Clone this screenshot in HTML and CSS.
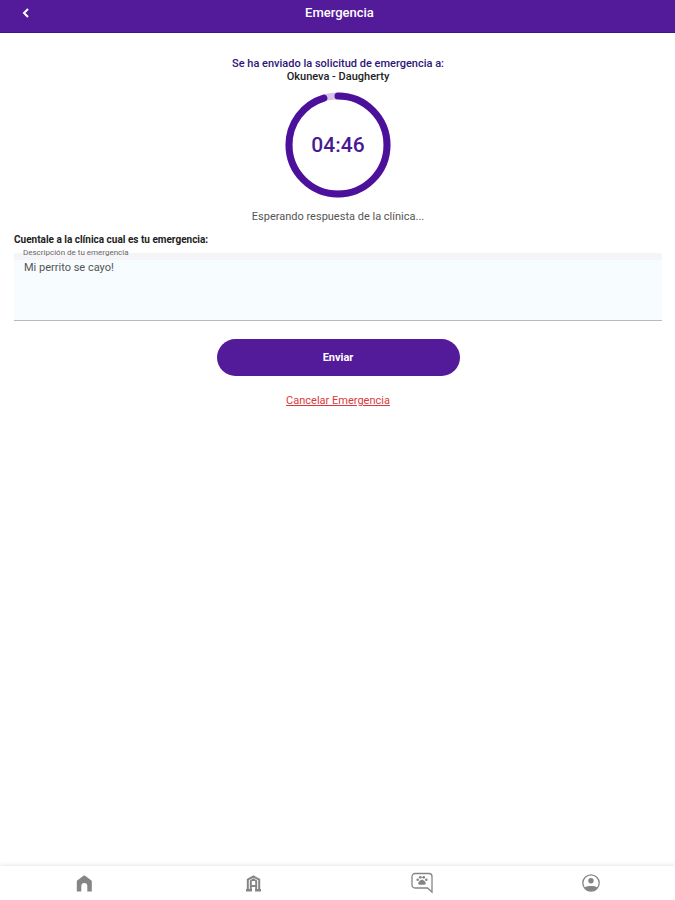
FILE: index.html
```html
<!DOCTYPE html>
<html lang="es">
<head>
  <meta charset="UTF-8">
  <meta name="viewport" content="width=device-width, initial-scale=1.0">
  <title>Emergencia</title>
  <link rel="stylesheet" href="styles.css">
</head>
<body>

  <header class="top-bar">
    <button class="back-btn" type="button" aria-label="Volver">
      <svg width="8" height="12" viewBox="0 0 8 12"><path d="M6 2 2 6l4 4"/></svg>
    </button>
    <h1>Emergencia</h1>
  </header>

  <main class="content">
    <p class="sent-to">Se ha enviado la solicitud de emergencia a:</p>
    <p class="clinic">Okuneva - Daugherty</p>

    <div class="timer">
      <svg width="106" height="106" viewBox="0 0 106 106">
        <circle class="track" cx="53" cy="53" r="49"/>
        <circle class="progress" cx="53" cy="53" r="49" pathLength="300" stroke-dasharray="286 300" transform="rotate(-90 53 53)"/>
      </svg>
      <span class="time">04:46</span>
    </div>

    <p class="waiting">Esperando respuesta de la clínica...</p>

    <form class="emergency-form">
      <p class="question">Cuentale a la clínica cual es tu emergencia:</p>
      <div class="field">
        <label for="description">Descripción de tu emergencia</label>
        <textarea id="description">Mi perrito se cayo!</textarea>
      </div>
      <button class="send-btn" type="button">Enviar</button>
      <a class="cancel" href="#">Cancelar Emergencia</a>
    </form>
  </main>

  <nav class="tab-bar">
    <a href="#" aria-label="Inicio">
      <svg width="20" height="20" viewBox="0 0 20 20">
        <path class="fill" d="M9.500 2.800 3.500 7.200Q2.800 7.700 2.800 8.500V18.500h4.500V13a3 3 0 0 1 6 0v5.500h4.500V8.500q0-.8-.7-1.300L11.100 2.800q-.8-.6-1.600 0z"/>
      </svg>
    </a>
    <a href="#" aria-label="Clínicas">
      <svg width="20" height="20" viewBox="0 0 20 20">
        <path class="house" d="M4.800 17V6.500L10.500 3.500l5.700 3V17M7.800 17V8L10.500 6.500 13.200 8V17M7.800 13h5.400"/>
        <path class="fill" d="M3 16h6v2.500H3zM12 16h6v2.500h-6z"/>
      </svg>
    </a>
    <a href="#" aria-label="Mensajes">
      <svg width="24" height="24" viewBox="0 0 24 24">
        <path class="line" d="M5 2.500h14a3 3 0 0 1 3 3V21l-4.500-4H5a3 3 0 0 1-3-3V5.500a3 3 0 0 1 3-3z"/>
        <circle class="fill" cx="7.700" cy="8.800" r="1.300"/>
        <circle class="fill" cx="10.300" cy="6.300" r="1.400"/>
        <circle class="fill" cx="13.700" cy="6.300" r="1.400"/>
        <circle class="fill" cx="16.300" cy="8.800" r="1.300"/>
        <path class="fill" d="M12 8.800c1.700 0 3.800 2.300 3.800 3.800 0 1.300-1.500 1.200-3.800 1.200s-3.800.1-3.800-1.200c0-1.500 2.100-3.800 3.800-3.800z"/>
      </svg>
    </a>
    <a href="#" aria-label="Perfil">
      <svg width="20" height="20" viewBox="0 0 20 20">
        <circle class="line" cx="10" cy="10" r="8.200"/>
        <circle class="fill" cx="10" cy="7.800" r="2.700"/>
        <path class="fill" d="M3.500 14.500c2-1.200 4-1.600 6.500-1.600s4.500.4 6.500 1.600A8 8 0 0 1 10 18a8 8 0 0 1-6.500-3.500z"/>
      </svg>
    </a>
  </nav>

</body>
</html>
```
FILE: styles.css
```css
* {
  box-sizing: border-box;
}

body {
  display: flex;
  flex-direction: column;
  min-height: 100vh;
  margin: 0;
  background-color: #fff;
  color: #222;
  font-family: Roboto, "Liberation Sans", sans-serif;
  font-size: 11px;
  line-height: 13px;
}

p {
  margin: 0;
}

button {
  border: none;
  font-family: inherit;
  cursor: pointer;
}

/* header */
.top-bar {
  display: grid;
  grid-template-columns: 52px 1fr 48px;
  align-items: center;
  padding: 4px 0 10px;
  background-color: #531a9a;
  border-bottom: 1px solid #45108c;
  color: #fff;
}

.top-bar h1 {
  margin: 0;
  font-size: 13px;
  font-weight: 500;
  line-height: 18px;
  text-align: center;
}

.back-btn {
  display: flex;
  justify-content: center;
  padding: 0;
  background: none;
}

.back-btn path {
  fill: none;
  stroke: #fff;
  stroke-width: 2;
}

/* content */
.content {
  display: flex;
  flex: 1;
  flex-direction: column;
  align-items: center;
  padding: 24px 13px 24px 14px;
}

.sent-to {
  color: #2f1578;
  font-weight: 500;
}

.clinic {
  font-weight: 500;
}

.timer {
  display: grid;
  place-items: center;
  margin: 9px 0 12px;
}

.timer svg,
.time {
  grid-area: 1 / 1;
}

.timer circle {
  fill: none;
  stroke-width: 7;
}

.track {
  stroke: #d9c3ea;
}

.progress {
  stroke: #4c119b;
  stroke-linecap: round;
}

.time {
  color: #4a1a96;
  font-size: 21px;
  font-weight: 500;
  line-height: 24px;
}

.waiting {
  color: #555;
}

.emergency-form {
  display: flex;
  flex-direction: column;
  align-items: center;
  align-self: stretch;
  margin-top: 10px;
}

.question {
  align-self: flex-start;
  font-size: 10px;
  font-weight: 700;
}

.field {
  position: relative;
  align-self: stretch;
  margin: 7px 0 18px;
}

.field label {
  position: absolute;
  top: -5px;
  left: 9px;
  color: #666;
  font-size: 8px;
  line-height: 10px;
}

.field textarea {
  display: block;
  width: 100%;
  height: 68px;
  padding: 1px 10px;
  border: none;
  border-top: 7px solid #f5f5f7;
  border-bottom: 1px solid #b5b9c0;
  border-radius: 2px 2px 0 0;
  outline: none;
  background-color: #f7fcff;
  color: #555;
  font: inherit;
  resize: none;
}

.send-btn {
  width: 243px;
  padding: 12px;
  border-radius: 20px;
  background-color: #531a9a;
  color: #fff;
  font-size: 11px;
  font-weight: 700;
  line-height: 13px;
}

.cancel {
  margin-top: 18px;
  color: #d83a3e;
}

/* bottom navigation */
.tab-bar {
  display: grid;
  grid-template-columns: repeat(4, 1fr);
  padding: 5px 0;
  box-shadow: 0 -1px 4px rgba(0, 0, 0, 0.1);
}

.tab-bar a {
  display: flex;
  align-items: center;
  justify-content: center;
  height: 24px;
}

.tab-bar .fill {
  fill: #858585;
}

.tab-bar .line {
  fill: none;
  stroke: #858585;
  stroke-width: 1.3;
}

.tab-bar .house {
  fill: none;
  stroke: #858585;
  stroke-width: 2;
}
```
